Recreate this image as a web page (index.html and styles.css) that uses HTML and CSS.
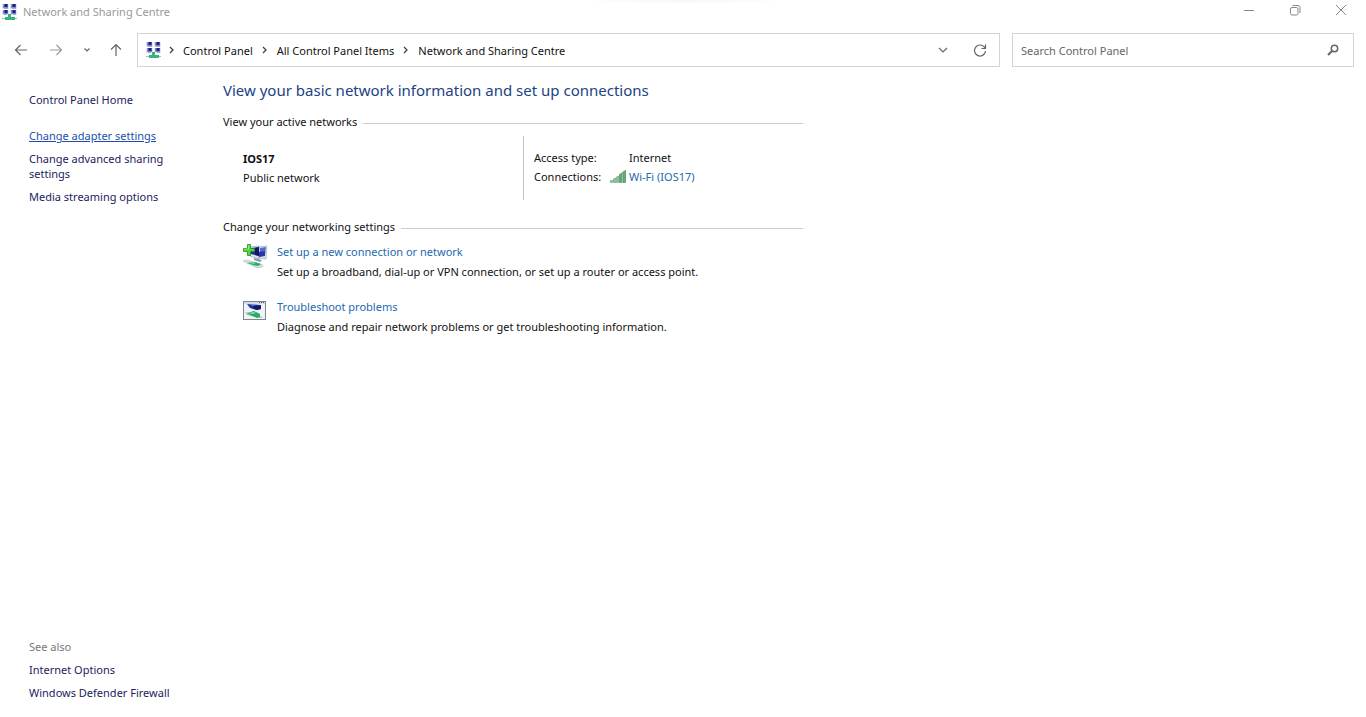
FILE: index.html
```html
<!DOCTYPE html>
<html lang="en-GB">
<head>
<meta charset="utf-8">
<title>Network and Sharing Centre</title>
<meta name="viewport" content="width=device-width, initial-scale=1">
<link rel="stylesheet" href="styles.css">
</head>
<body>
<svg class="defs" aria-hidden="true">
  <defs>
    <symbol id="net" viewBox="0 0 16 16">
      <g fill="#dfe3f5"><path d="M0 0h7v5H0zM8 0h7v5H8zM0 6h7v5H0zM8 6h7v5H8z"/></g>
      <g fill="#7f8bd6"><path d="M1 0h5v4H1zM9 0h5v4H9zM1 6h5v4H1zM9 6h5v4H9z"/></g>
      <g fill="#1b2076"><path d="M2.500 0h3v3h-3zM10.500 0h3v3h-3zM2.500 6h3v3h-3zM10.500 6h3v3h-3z"/></g>
      <g fill="#a3a9cb"><path d="M2 4h4v1H2zM10 4h4v1h-4zM2 10h3v1H2zM11 10h3v1h-3z"/></g>
      <path fill="#a9b3b5" d="M0 14h15v1H0z"/>
      <path fill="#35b57a" d="M6 10h3v3h4v3H3v-3h3z"/>
    </symbol>
    <symbol id="crumb" viewBox="0 0 6 8"><path d="M1 1l3 3-3 3" fill="none" stroke="#444" stroke-width="1.3"/></symbol>
  </defs>
</svg>
<div class="window">
  <header class="titlebar">
    <svg class="icon16"><use href="#net"/></svg>
    <span class="title">Network and Sharing Centre</span>
    <div class="controls">
      <button aria-label="Minimise"><svg width="12" height="12" viewBox="0 0 12 12"><path d="M1 6.500h10"/></svg></button>
      <button aria-label="Restore"><svg width="12" height="12" viewBox="0 0 12 12"><rect x="1.500" y="3.500" width="7.500" height="7.500" rx="1.500"/><path d="M3.500 1.500H9a2 2 0 0 1 2 2V9"/></svg></button>
      <button aria-label="Close"><svg width="12" height="12" viewBox="0 0 12 12"><path d="M1 1l10 10M11 1L1 11"/></svg></button>
    </div>
  </header>
  <nav class="toolbar" aria-label="Navigation">
    <div class="history">
      <button aria-label="Back"><svg width="14" height="12" viewBox="0 0 14 12"><path d="M13 6H1.500M6.500 1l-5 5 5 5"/></svg></button>
      <button class="dim" aria-label="Forward"><svg width="14" height="12" viewBox="0 0 14 12"><path d="M1 6h11.500M7.500 1l5 5-5 5"/></svg></button>
      <button class="recent" aria-label="Recent locations"><svg width="8" height="6" viewBox="0 0 8 6"><path d="M1.500 1.500L4 4l2.500-2.500"/></svg></button>
      <button aria-label="Up"><svg width="12" height="14" viewBox="0 0 12 14"><path d="M6 13V1.500M1 6.500l5-5 5 5"/></svg></button>
    </div>
    <div class="address">
      <svg class="icon16"><use href="#net"/></svg>
      <svg class="sep"><use href="#crumb"/></svg>
      <a href="#">Control Panel</a>
      <svg class="sep"><use href="#crumb"/></svg>
      <a href="#">All Control Panel Items</a>
      <svg class="sep"><use href="#crumb"/></svg>
      <a href="#">Network and Sharing Centre</a>
      <button class="drop" aria-label="Previous locations"><svg width="10" height="6" viewBox="0 0 10 6"><path d="M1 1l4 4 4-4"/></svg></button>
      <button aria-label="Refresh"><svg width="14" height="14" viewBox="0 0 14 14"><path d="M12.300 6A5.500 5.500 0 1 0 12.500 8M12.500 1.500v4h-4"/></svg></button>
    </div>
    <form class="search">
      <input type="search" aria-label="Search Control Panel" placeholder="Search Control Panel">
      <button type="button" aria-label="Search"><svg width="12" height="12" viewBox="0 0 12 12"><circle cx="7.500" cy="4.500" r="3.200"/><path class="handle" d="M5 7l-4 4"/></svg></button>
    </form>
  </nav>
  <div class="body">
    <aside class="sidebar">
      <a href="#" class="home">Control Panel Home</a>
      <a href="#" class="active">Change adapter settings</a>
      <a href="#">Change advanced sharing settings</a>
      <a href="#">Media streaming options</a>
      <span class="see">See also</span>
      <a href="#">Internet Options</a>
      <a href="#">Windows Defender Firewall</a>
    </aside>
    <main class="main">
      <h1>View your basic network information and set up connections</h1>
      <h2>View your active networks</h2>
      <section class="network">
        <div class="name"><strong>IOS17</strong><span>Public network</span></div>
        <dl class="details">
          <dt>Access type:</dt><dd>Internet</dd>
          <dt>Connections:</dt>
          <dd><svg class="signal" width="16" height="13" viewBox="0 0 16 13"><g fill="#8cc79b" stroke="#5f9a6e" stroke-width=".6"><path d="M.5 10.500h2v2h-2zM3.500 9l2-1v4.500h-2zM6.500 7l2-1v6.500h-2z"/></g><g fill="#5fb173" stroke="#3b7a4c" stroke-width=".6"><path d="M9.500 4.500l2-1.500v9.500h-2zM12.800 2L15.500.5v12h-2.700z"/></g></svg><a href="#">Wi-Fi (IOS17)</a></dd>
        </dl>
      </section>
      <h2>Change your networking settings</h2>
      <section class="tasks">
        <article>
          <svg width="24" height="24" viewBox="0 0 24 24">
            <path fill="#dce3ef" stroke="#8e9cbc" stroke-width=".6" d="M7 3l9-1v13l-9-3zM15 3l9-1-1 13-7-1z"/>
            <path fill="#222c9c" d="M8 4l8-1v9l-8-2z"/><path fill="#101766" d="M12 4l4-1v9l-4-1z"/>
            <path fill="#5769d0" d="M17 4l6-1-1 8-5 1z"/><path fill="#2a379f" d="M16 8l6-1v5l-6 1z"/>
            <path fill="#8b98ab" d="M11 14l8 2-2 2-6-2z"/>
            <path fill="#d9dddf" stroke="#a9b1b3" stroke-width=".5" d="M0 17l4-1 16 5-1 2-5 1z"/>
            <path fill="#1eb060" d="M4 19l8-1 6 2-3 2-5-1z"/><path fill="#8fe0ae" d="M5 19l6-.5 2 .5-2 .7z"/>
            <path fill="#51d837" stroke="#238d22" stroke-width=".8" d="M4.500.5h3v4h4v3h-4v4h-3v-4h-4v-3h4z"/>
            <path fill="#a9f28e" d="M5.300 1.300h1v4h-5v-.5h4z"/>
          </svg>
          <a href="#">Set up a new connection or network</a>
          <p>Set up a broadband, dial-up or VPN connection, or set up a router or access point.</p>
        </article>
        <article>
          <svg width="24" height="24" viewBox="0 0 24 24">
            <rect x=".5" y="2.500" width="22" height="18" fill="#f1f4f7" stroke="#7d858e"/>
            <path fill="#d3dbe4" d="M1 3h21v2H1z"/><path fill="#49525e" d="M16 3h1v1h-1zM18 3h1v1h-1zM20 3h1v1h-1z"/>
            <path fill="#20329e" d="M4 5l14 1v4l-5 1-6-2z"/><path fill="#111a68" d="M10 6l8 1v3l-4 1-4-2z"/><path fill="#6c83d2" d="M5 5l8 1-3 1z"/>
            <path fill="#b7bfc4" d="M2 13l18 5-2 1-14-3z"/>
            <path fill="#20ae62" d="M4 14l7-2 6 3v3l-3 1-7-3z"/><path fill="#8ae0ad" d="M5 14l6-1 2 1-4 1z"/>
          </svg>
          <a href="#">Troubleshoot problems</a>
          <p>Diagnose and repair network problems or get troubleshooting information.</p>
        </article>
      </section>
    </main>
  </div>
</div>
</body>
</html>
```
FILE: styles.css
```css
* { box-sizing: border-box; }
body {
  margin: 0;
  background: #fff;
  color: #111;
  font: 11px/15px "Noto Sans", "Open Sans", sans-serif;
}
a { color: inherit; text-decoration: none; }
button {
  display: grid;
  place-items: center;
  padding: 0;
  border: 0;
  background: none;
}
svg { display: block; flex: none; }
button svg { fill: none; stroke: #666; stroke-width: 1.2; }
.defs { position: absolute; width: 0; height: 0; }
.icon16 { width: 16px; height: 16px; }

.window { display: flex; flex-direction: column; min-height: 100vh; }

.titlebar {
  display: flex;
  align-items: center;
  gap: 5px;
  height: 23px;
  padding-left: 2px;
  color: #999;
  background: radial-gradient(ellipse 110px 4px at 50% 0, #f6f6f6, #fff) no-repeat;
}
.controls { display: flex; align-self: flex-start; margin-left: auto; padding-right: 2px; }
.controls button { width: 46px; height: 20px; }
.controls svg { stroke: #888; stroke-width: 1; }

.toolbar {
  display: grid;
  grid-template-columns: 137px 863fr 12px 342fr;
  padding: 10px 12px 0 0;
}
.history { display: flex; padding-left: 10px; }
.history button { flex: none; width: 22px; margin-right: 13px; }
.history .recent { width: 14px; margin-right: 11px; }
.history button:last-child { margin-right: 0; }
.history .dim svg { stroke: #999; }
.address, .search {
  display: flex;
  align-items: center;
  height: 34px;
  border: 1px solid #d4d4d4;
}
.address { padding: 0 9px 0 8px; color: #111; }
.sep { width: 6px; height: 8px; margin: 0 9px; }
.icon16 + .sep { margin: 0 8px 0 7px; }
.address button { width: 20px; height: 32px; }
.address .drop { margin: 0 17px 0 auto; }
.search { grid-column: 4; padding: 0 14px 0 8px; }
.search input {
  flex: 1;
  min-width: 0;
  padding: 0;
  border: 0;
  outline: 0;
  background: none;
  font: inherit;
}
.search input::placeholder { color: #666; opacity: 1; }
.search svg { stroke-width: 1.5; }
.search .handle { stroke-width: 2; }

.body { display: flex; flex: 1; }
.sidebar {
  display: flex;
  flex-direction: column;
  gap: 8px;
  width: 194px;
  padding: 25px 20px 17px 29px;
  color: #1b1b5e;
}
.home { margin-bottom: 13px; }
.active { color: #1c50a8; text-decoration: underline; }
.see { margin-top: auto; color: #777; }

.main { flex: 0 1 580px; margin-left: 29px; padding-top: 12px; }
h1 {
  margin: 0 0 13px;
  color: #1b4384;
  font-size: 15px;
  font-weight: 400;
  line-height: 22px;
}
h2 {
  display: flex;
  align-items: center;
  gap: 6px;
  margin: 0;
  font-size: 11px;
  font-weight: 400;
}
h2::after { content: ""; flex: 1; height: 1px; margin-top: 3px; background: #ccc; }
.network {
  display: flex;
  margin: 7px 0 19px;
  line-height: 19px;
}
.name { display: flex; flex-direction: column; width: 300px; padding: 13px 20px; }
.details {
  display: grid;
  grid-template-columns: 76px auto;
  align-content: start;
  margin: 0;
  padding: 12px 10px 14px;
  border-left: 1px solid #c4c4c4;
}
.details dd { display: flex; align-items: center; gap: 3px; margin: 0; }
.details dd:not(:has(svg)) { padding-left: 19px; }
.details a, .tasks a { color: #2468b0; }

.tasks { display: grid; gap: 15px; padding: 8px 0 0 20px; line-height: 20px; }
.tasks article { display: grid; grid-template-columns: 24px auto; column-gap: 10px; justify-content: start; }
.tasks svg { grid-row: span 2; margin-top: 2px; }
.tasks p { margin: 0; white-space: nowrap; }
```
